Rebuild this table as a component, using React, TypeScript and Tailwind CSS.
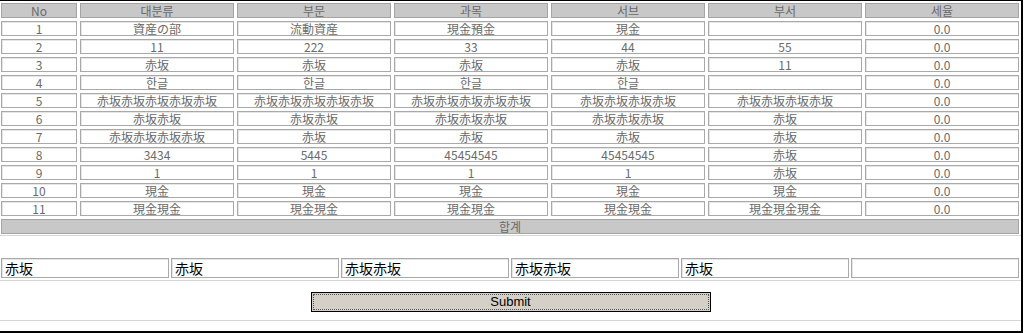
const headers = ['No', '대분류', '부문', '과목', '서브', '부서', '세율'];

const rows: string[][] = [
  ['1', '資産の部', '流動資産', '現金預金', '現金', '', '0.0'],
  ['2', '11', '222', '33', '44', '55', '0.0'],
  ['3', '赤坂', '赤坂', '赤坂', '赤坂', '11', '0.0'],
  ['4', '한글', '한글', '한글', '한글', '', '0.0'],
  ['5', '赤坂赤坂赤坂赤坂赤坂', '赤坂赤坂赤坂赤坂赤坂', '赤坂赤坂赤坂赤坂赤坂', '赤坂赤坂赤坂赤坂', '赤坂赤坂赤坂赤坂', '0.0'],
  ['6', '赤坂赤坂', '赤坂赤坂', '赤坂赤坂赤坂', '赤坂赤坂赤坂', '赤坂', '0.0'],
  ['7', '赤坂赤坂赤坂赤坂', '赤坂', '赤坂', '赤坂', '赤坂', '0.0'],
  ['8', '3434', '5445', '45454545', '45454545', '赤坂', '0.0'],
  ['9', '1', '1', '1', '1', '赤坂', '0.0'],
  ['10', '現金', '現金', '現金', '現金', '現金', '0.0'],
  ['11', '現金現金', '現金現金', '現金現金', '現金現金', '現金現金現金', '0.0'],
];

const inputs = ['赤坂', '赤坂', '赤坂赤坂', '赤坂赤坂', '赤坂', ''];

const cellFont = { fontFamily: '"Noto Sans CJK KR", "Noto Sans CJK JP", sans-serif' };

export default function App() {
  return (
    <div className="w-[1023px] h-[333px] bg-white border-t border-r-2 border-b-2 border-black" style={cellFont}>
      {/* ledger grid */}
      <div className="pt-[2px] pl-[1px] pb-[1px] border-b border-[#d6d6d6]">
        <div className="grid grid-cols-[76px_repeat(6,154px)] auto-rows-[15px] gap-[3px] text-[12px] leading-[13px] text-[#6a6a6a]">
          {headers.map(h => (
            <div key={h} className="bg-[#c8c8c8] border border-[#a4a4a4] flex items-center justify-center">
              {h}
            </div>
          ))}
          {rows.map(r =>
            r.map((v, i) => (
              <div
                key={r[0] + '-' + i}
                className="bg-white border border-[#a9a9a9] shadow-[inset_1px_1px_0_#e6e6e6] flex items-center justify-center whitespace-nowrap overflow-hidden"
              >
                {v}
              </div>
            ))
          )}
          <div className="col-span-7 bg-[#c8c8c8] border border-[#a4a4a4] flex items-center justify-center">
            합계
          </div>
        </div>
      </div>

      {/* entry fields */}
      <div className="pt-[22px] pb-[2px] pl-[1px] border-b border-[#d6d6d6]">
        <div className="grid grid-cols-[repeat(6,168px)] gap-[2px]">
          {inputs.map((v, i) => (
            <input
              key={i}
              defaultValue={v}
              className="h-[20px] px-[3px] border border-[#a9a9a9] shadow-[inset_1px_1px_0_#e6e6e6] text-[14px] text-black outline-none"
              style={{ fontFamily: '"Noto Sans CJK JP", sans-serif' }}
            />
          ))}
        </div>
      </div>

      <div className="h-[40px] flex items-start justify-center pt-[11px] border-b border-[#d6d6d6]">
        <button
          className="w-[400px] h-[20px] bg-[#d4d0c8] border border-black outline-1 outline-dotted outline-[#555] -outline-offset-[3px] text-[13px] leading-[18px] text-black"
          style={{ fontFamily: '"Liberation Sans", Arial, sans-serif' }}
        >
          Submit
        </button>
      </div>
    </div>
  );
}
